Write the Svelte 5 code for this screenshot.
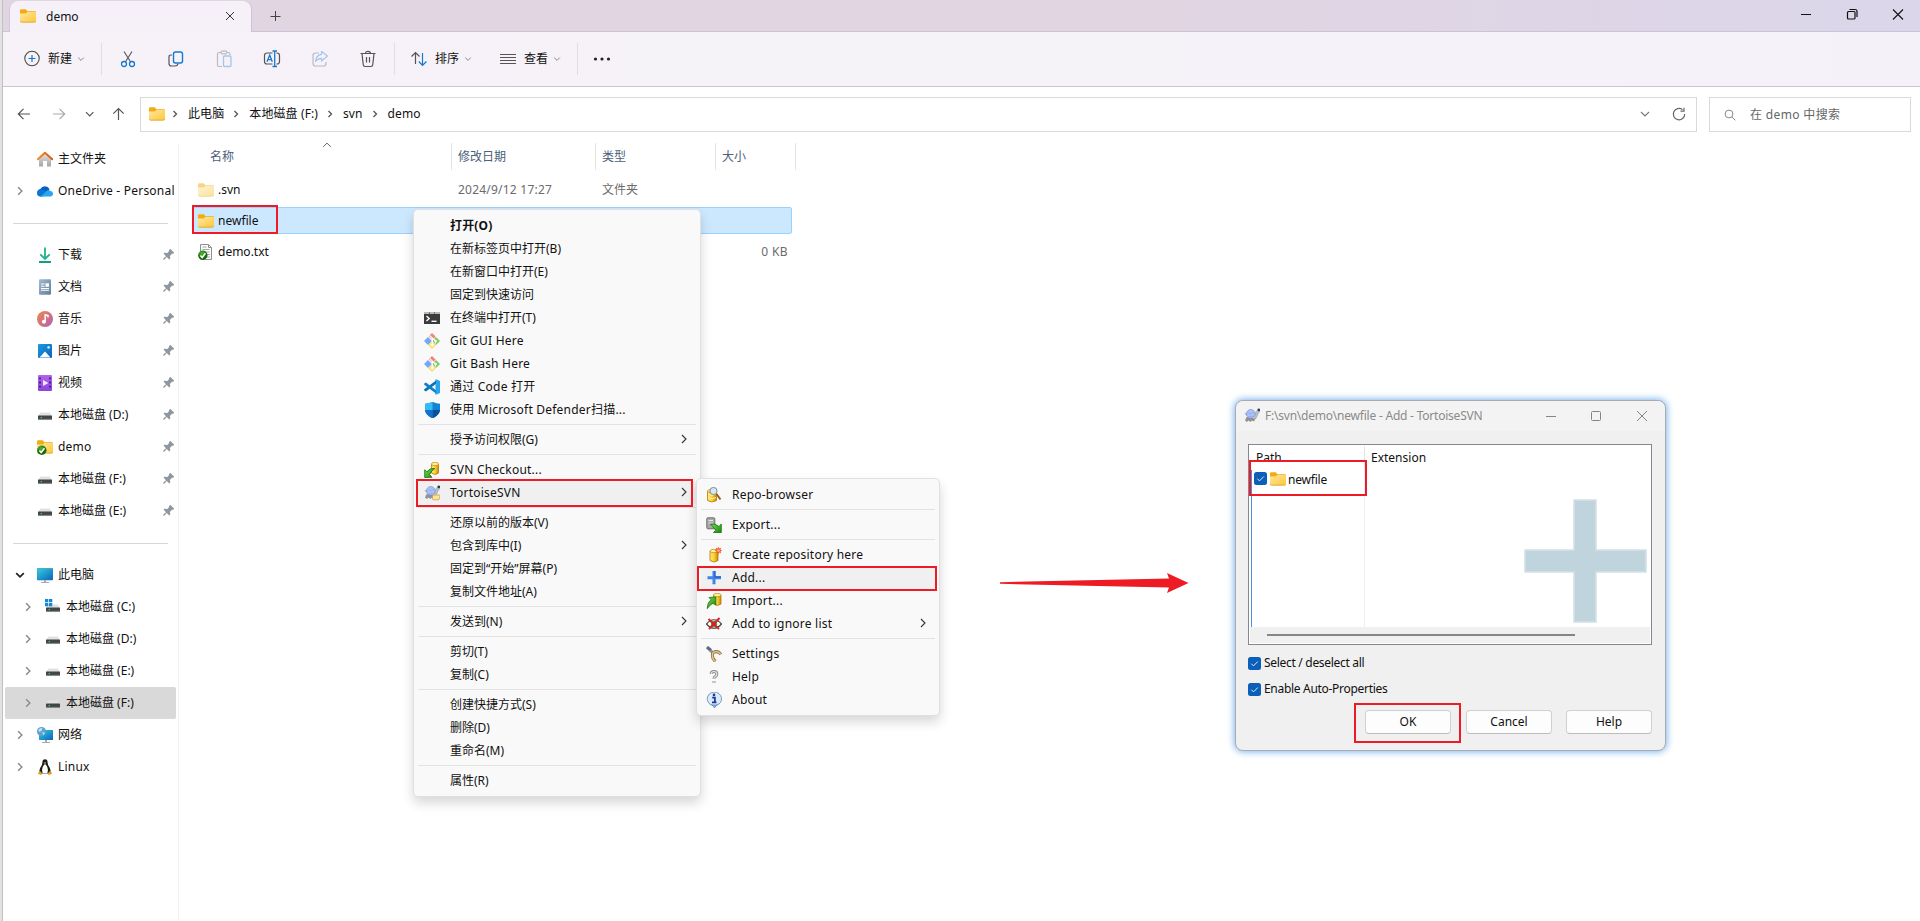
<script>
  const home = [
    { icon: 'home', text: '主文件夹' },
    { icon: 'cloud', text: 'OneDrive - Personal', arrow: 'right' },
    { sep: true },
    { icon: 'download', text: '下载', pin: true },
    { icon: 'doc', text: '文档', pin: true },
    { icon: 'music', text: '音乐', pin: true },
    { icon: 'picture', text: '图片', pin: true },
    { icon: 'video', text: '视频', pin: true },
    { icon: 'drive', text: '本地磁盘 (D:)', pin: true },
    { icon: 'folderok', text: 'demo', pin: true },
    { icon: 'drive', text: '本地磁盘 (F:)', pin: true },
    { icon: 'drive', text: '本地磁盘 (E:)', pin: true },
    { sep: true },
    { icon: 'pc', text: '此电脑', arrow: 'down' },
    { icon: 'windrive', text: '本地磁盘 (C:)', arrow: 'right', nested: true },
    { icon: 'drive', text: '本地磁盘 (D:)', arrow: 'right', nested: true },
    { icon: 'drive', text: '本地磁盘 (E:)', arrow: 'right', nested: true },
    { icon: 'drive', text: '本地磁盘 (F:)', arrow: 'right', nested: true, selected: true },
    { icon: 'network', text: '网络', arrow: 'right' },
    { icon: 'linux', text: 'Linux', arrow: 'right' }
  ];
  const menu = [
    { text: '打开(O)', bold: true },
    { text: '在新标签页中打开(B)' },
    { text: '在新窗口中打开(E)' },
    { text: '固定到快速访问' },
    { text: '在终端中打开(T)', icon: 'terminal' },
    { text: 'Git GUI Here', icon: 'git' },
    { text: 'Git Bash Here', icon: 'git' },
    { text: '通过 Code 打开', icon: 'code' },
    { text: '使用 Microsoft Defender扫描...', icon: 'shield' },
    { sep: true },
    { text: '授予访问权限(G)', sub: true },
    { sep: true },
    { text: 'SVN Checkout...', icon: 'checkout' },
    { text: 'TortoiseSVN', icon: 'tortoise', sub: true, hot: true },
    { sep: true },
    { text: '还原以前的版本(V)' },
    { text: '包含到库中(I)', sub: true },
    { text: '固定到“开始”屏幕(P)' },
    { text: '复制文件地址(A)' },
    { sep: true },
    { text: '发送到(N)', sub: true },
    { sep: true },
    { text: '剪切(T)' },
    { text: '复制(C)' },
    { sep: true },
    { text: '创建快捷方式(S)' },
    { text: '删除(D)' },
    { text: '重命名(M)' },
    { sep: true },
    { text: '属性(R)' }
  ];
  const submenu = [
    { text: 'Repo-browser', icon: 'repo' },
    { sep: true },
    { text: 'Export...', icon: 'export' },
    { sep: true },
    { text: 'Create repository here', icon: 'create' },
    { text: 'Add...', icon: 'add', hot: true },
    { text: 'Import...', icon: 'import' },
    { text: 'Add to ignore list', icon: 'ignore', sub: true },
    { sep: true },
    { text: 'Settings', icon: 'settings' },
    { text: 'Help', icon: 'help' },
    { text: 'About', icon: 'about' }
  ];
  const crumbs = ['此电脑', '本地磁盘 (F:)', 'svn', 'demo'];
  // Labels with a run of Latin letters are tracked a little wider.
  const latin = (t) => /[A-Za-z]{3}/.test(t);
</script>

<svg class="defs" width="0" height="0" aria-hidden="true">
  <defs>
    <linearGradient id="gFolder" x1="0" y1="0" x2="1" y2="1"><stop offset="0" stop-color="#ffe7a2" /><stop offset="1" stop-color="#fcc839" /></linearGradient>
    <linearGradient id="gRoof" x1="0" y1="0" x2="1" y2="0"><stop offset="0" stop-color="#f38b2a" /><stop offset="1" stop-color="#d65a12" /></linearGradient>
    <linearGradient id="gWall" x1="0" y1="0" x2="0" y2="1"><stop offset="0" stop-color="#e4e4e4" /><stop offset="1" stop-color="#a5a5a5" /></linearGradient>
    <linearGradient id="gDoc" x1="0" y1="0" x2="1" y2="1"><stop offset="0" stop-color="#a5b9cf" /><stop offset="1" stop-color="#5f7f9f" /></linearGradient>
    <linearGradient id="gMusic" x1="0" y1="0" x2="1" y2="1"><stop offset="0" stop-color="#f18746" /><stop offset="1" stop-color="#b160b6" /></linearGradient>
    <linearGradient id="gPic" x1="0" y1="0" x2="1" y2="1"><stop offset="0" stop-color="#199be4" /><stop offset="1" stop-color="#0f62b8" /></linearGradient>
    <linearGradient id="gVid" x1="0" y1="0" x2="0" y2="1"><stop offset="0" stop-color="#b165ec" /><stop offset="1" stop-color="#8a44d8" /></linearGradient>
    <linearGradient id="gPc" x1="0" y1="0" x2="1" y2="1"><stop offset="0" stop-color="#36d0e0" /><stop offset="1" stop-color="#0c62b8" /></linearGradient>
    <linearGradient id="gCyl" x1="0" y1="0" x2="1" y2="0"><stop offset="0" stop-color="#ffe873" /><stop offset=".5" stop-color="#fbd23a" /><stop offset="1" stop-color="#c98a05" /></linearGradient>
    <linearGradient id="gGreen" x1="0" y1="0" x2="1" y2="1"><stop offset="0" stop-color="#7bdc4a" /><stop offset="1" stop-color="#148a12" /></linearGradient>
    <radialGradient id="gOk" cx=".4" cy=".3"><stop offset="0" stop-color="#53b834" /><stop offset="1" stop-color="#146a08" /></radialGradient>
  </defs>
</svg>

{#snippet cyl(x, y, w, h)}
  <path d="M{x} {y + 2}v{h - 4}q{w / 2} 3 {w} 0v{-(h - 4)}z" fill="url(#gCyl)" stroke="#b57a08" stroke-width=".8" />
  <ellipse cx={x + w / 2} cy={y + 2} rx={w / 2} ry="1.7" fill="#fff0a0" stroke="#c08a10" stroke-width=".7" />
{/snippet}

{#snippet tick()}
  <circle cx="4.8" cy="11.2" r="4.7" fill="url(#gOk)" />
  <path d="M2.4 11.4l1.8 2.1 3.2-4.2" fill="none" stroke="#fff" stroke-width="1.6" />
{/snippet}

{#snippet folder()}
  <path d="M0 2.500q0-1.200 1.200-1.200h4.500l1.800 1.900H15q1 0 1 1V7H0z" fill="#f3ab12" />
  <path d="M0 5.500h5.600L7.400 4H15.400q.6 0 .6.700V13q0 1.200-1.200 1.200H1.200Q0 14.200 0 13z" fill="url(#gFolder)" />
  <path d="M.3 13.300q.3.900 1.200.9h13q.9 0 1.200-.9" fill="none" stroke="#dfa01d" stroke-width=".8" />
{/snippet}

{#snippet drive()}
  <path d="M3.500 5.500h9l2.500 3.500H1z" fill="#dfe1e3" />
  <rect x="1" y="8.600" width="14" height="4.200" rx=".5" fill="#434547" />
  <rect x="1" y="11.900" width="14" height=".9" fill="#8d8f91" />
  <rect x="3.600" y="10" width="1.200" height="1.200" fill="#3fe04b" />
{/snippet}

{#snippet screen()}
  <rect x="0" y="1.500" width="16" height="11.500" rx=".8" fill="url(#gPc)" stroke="#1f87a8" stroke-width=".6" />
  <path d="M7 13h2v2h3v1H4v-1h3z" fill="#a3a9ae" />
{/snippet}

{#snippet tort()}
  <path d="M2.500 9L1 12.500l2 1.500 1.500-1.500 2 1.500 1.500-1.500 2 1 1.500-3z" fill="#8f9299" />
  <path d="M.3 5l4 1.200-1 2z" fill="#8f9299" />
  <path d="M10 8l1.500-3.500q1.500-3 3.500-2l.6 1.500q-1.600 1-2.100 3.500L11.500 11z" fill="#b9bdc6" stroke="#85898f" stroke-width=".4" />
  <circle cx="14.800" cy="1.800" r="1.400" fill="#124458" />
  <circle cx="6.800" cy="5.800" r="4.300" fill="#a9c1fb" stroke="#7e93cd" stroke-width=".7" />
  <path d="M3.300 4.500q3 2 7 0M4 9q3-1.500 6 0" fill="none" stroke="#8aa2df" stroke-width=".6" />
{/snippet}

{#snippet ico(name)}
  <svg class="ico" width="16" height="16" viewBox="0 0 16 16">
    {#if name === 'folder'}
      {@render folder()}
    {:else if name === 'folderok'}
      {@render folder()}{@render tick()}
    {:else if name === 'home'}
      <path d="M2 7.500L8 2l6 5.500V15q0 .6-.6.6H10V10H6v5.600H2.600Q2 15.600 2 15z" fill="url(#gWall)" />
      <path d="M.8 8.300L8 1.700l7.200 6.600" fill="none" stroke="url(#gRoof)" stroke-width="2" stroke-linecap="round" stroke-linejoin="round" />
    {:else if name === 'cloud'}
      <path d="M4 13.500A3.800 3.800 0 0 1 3.300 6 5.200 5.200 0 0 1 12.500 6l-4 7z" fill="#0a5fc0" />
      <path d="M3.600 13.500q-3.600-.3-3.600-3.500 0-2.500 2.500-3.300Q5 6 9 8.500z" fill="#0b76d6" />
      <path d="M3.500 13.500L9.500 8q2-2 4 0 2.500.3 2.500 2.800 0 2.700-3 2.700z" fill="#2aa5ef" />
    {:else if name === 'download'}
      <path d="M8 .5V12M3.300 7.300L8 12l4.700-4.700" fill="none" stroke="#1fb28b" stroke-width="1.800" />
      <rect x="2" y="14" width="12" height="2" fill="#129c8c" />
    {:else if name === 'doc'}
      <rect x="2" y=".2" width="12" height="15.600" rx="1" fill="url(#gDoc)" />
      <path d="M4 5h3.500M4 7.300h3.500M4 9.500h8M4 11.300h8" stroke="#fff" stroke-width="1.100" />
      <rect x="8.500" y="4.300" width="3.500" height="3.500" fill="#fff" />
    {:else if name === 'music'}
      <circle cx="8" cy="8" r="8" fill="url(#gMusic)" />
      <circle cx="6.900" cy="10.700" r="2" fill="#fff" /><path d="M8.200 10.700V3.800l2.800.8v2" fill="none" stroke="#fff" stroke-width="1.500" />
    {:else if name === 'picture'}
      <rect x="1" y="1" width="14" height="14" rx="1" fill="url(#gPic)" />
      <path d="M2.500 14.500L8 8.600l5.500 5.900z" fill="#fff" /><circle cx="11.600" cy="4.400" r="1.300" fill="#cfeaff" />
    {:else if name === 'video'}
      <rect x="1" y="0" width="14" height="16" rx="1" fill="url(#gVid)" />
      <path d="M3 2.500v12M13 2.500v12" stroke="#451a80" stroke-width="1.800" stroke-dasharray="1.800 2.300" /><path d="M6 5l5.500 3L6 11z" fill="#f2e4ff" />
    {:else if name === 'drive'}
      {@render drive()}
    {:else if name === 'windrive'}
      {@render drive()}
      <path d="M0 0h3.300v3.300H0zM4 0h3.300v3.300H4zM0 4h3.300v3.300H0zM4 4h3.300v3.300H4z" fill="#1188d8" />
    {:else if name === 'pc'}
      {@render screen()}
    {:else if name === 'network'}
      <rect x="2" y="3" width="14" height="10" fill="url(#gPc)" /><path d="M8 13h2v2h3v1H5v-1h3z" fill="#a3a9ae" />
      <circle cx="4.500" cy="4.500" r="4.500" fill="#5aa3cf" /><path d="M1.500 2.500q2-2 4-1.500L4.500 4 2 5zM5 5l3 1-1.500 2z" fill="#c9e3f1" />
    {:else if name === 'linux'}
      <path d="M8 .2q2.600 0 2.600 3.200 0 2 1.600 4.300 2.300 4 .8 6.800H3q-1.500-2.800.8-6.800Q5.400 5.400 5.400 3.400 5.400.2 8 .2z" fill="#1b1b1b" />
      <path d="M8 5q1.400.8 2.400 3.300 1.200 3 0 5.900H5.600q-1.200-2.900 0-5.900Q6.600 5.800 8 5z" fill="#fff" />
      <path d="M6.700 3.800L8 3.300l1.300.5L8 5z" fill="#f0b72a" />
      <path d="M2.500 11.500l3 3q-.5 1.500-2 1.200l-2.500-.9zM13.500 11.500l-3 3q.5 1.500 2 1.200l2.500-.9z" fill="#d9a01b" />
    {:else if name === 'txt'}
      <path d="M2.500.5h8l3 3v12h-11z" fill="#fbfbfb" stroke="#8f8f8f" /><path d="M10.500.5v3h3" fill="none" stroke="#8f8f8f" />
      <path d="M4.500 3h4M4.500 5.500h7M4.500 8h7M8 10.500h4M8 13h4" stroke="#9c9c9c" stroke-width=".9" />{@render tick()}
    {:else if name === 'terminal'}
      <rect x="0" y="2" width="16" height="12" fill="#3b3b3b" /><path d="M0 2h16v2H0z" fill="#b9b9b9" /><path d="M5 2h1v2H5zM10 2h1v2h-1z" fill="#777" />
      <path d="M2.500 6l2.700 2.500L2.500 11" fill="none" stroke="#fff" stroke-width="1.400" /><path d="M7.500 11.300h5" stroke="#fff" stroke-width="1.400" />
    {:else if name === 'git'}
      <path d="M8 0l3.600 3.600-3 3L4.700 3.300z" fill="#f5807c" /><path d="M4 4l4 4-4 4-4-4z" fill="#74a7f7" />
      <path d="M12 4l4 4-4 4-4-4z" fill="#83c95e" /><path d="M8 8.400l4 3.800L8 16l-4-3.800z" fill="#fce07c" />
      <path d="M5.500 2.300L11.500 8v2.500M8.300 5v7" fill="none" stroke="#fff" stroke-width="1.100" /><circle cx="11.600" cy="8" r="1.300" fill="#fff" /><circle cx="8.300" cy="12" r="1.300" fill="#fff" />
    {:else if name === 'code'}
      <path d="M11.500 0L16 2v12l-4.500 2z" fill="#26a4ee" />
      <path d="M12 1.500v3.300L2 12.500.2 11.400v-1.200z" fill="#0b71b8" />
      <path d="M12 14.500v-3.300L2 3.500.2 4.600v1.200z" fill="#0b80cc" />
    {:else if name === 'shield'}
      <path d="M8.500-.3Q12 1.700 16 1.700V7.500Q16 13 8.500 16.400 1 13 1 7.500V1.700Q5 1.700 8.500-.3z" fill="#1482d4" />
      <path d="M8.500-.3V8H1V1.700Q5 1.700 8.500-.3z" fill="#32bcf4" /><path d="M8.500 8H16Q15.500 13 8.500 16.400z" fill="#0d4f9c" /><path d="M8.500 8v8.400Q1.500 13 1 8z" fill="#1271c8" />
    {:else if name === 'checkout'}
      {@render cyl(7.500, 0, 7, 13)}
      <path d="M.7 15.500V7.800l2.200 2Q6 5.500 10.800 6.500 7.500 8.500 5.600 12.500l2.400 2.800z" fill="url(#gGreen)" stroke="#17700f" stroke-width=".8" />
    {:else if name === 'import'}
      {@render cyl(7.500, 0, 7.500, 13)}
      <path d="M9.800 4v8L7.500 10Q3.800 11.500 1.300 15.600 1.500 9 5.200 6.800L3 4.500z" fill="url(#gGreen)" stroke="#17700f" stroke-width=".8" />
    {:else if name === 'tortoise'}
      {@render tort()}
      <path d="M8.500 11q.2-1 1.500-1h5q1.200 0 1 1.200l-.6 2.600q-.2 1-1.200 1H9.500q-1.200 0-1-1.200z" fill="#fae39a" stroke="#c69a3a" stroke-width=".7" />
    {:else if name === 'tort'}
      {@render tort()}
    {:else if name === 'repo'}
      {@render cyl(1.500, 2, 9, 13.500)}
      <path d="M2 7q4 2.500 8 0M2 10.500q4 2.500 8 0" fill="none" stroke="#fff3a8" />
      <circle cx="7.500" cy="4" r="3.600" fill="#d4e6f8" stroke="#858a90" /><path d="M10.500 7l4 5.500" stroke="#9b5c22" stroke-width="2" />
    {:else if name === 'export'}
      <rect x=".8" y=".8" width="8" height="11" rx="1" fill="#a8a8a8" stroke="#6e6e6e" /><path d="M2.500 3.500h4.500M2.500 6h4.500" stroke="#e8e8e8" />
      <path d="M15.300 7v8.500H7.500l2.200-2.300Q6.500 9.500 4.500 7 9.500 6.300 13 9.500z" fill="url(#gGreen)" stroke="#17700f" stroke-width=".8" />
    {:else if name === 'create'}
      {@render cyl(4, 2, 8, 13.500)}
      <path d="M12.500-.4l.8 2 2-.8-.8 2 2 .8-2 .8.8 2-2-.8-.8 2-.8-2-2 .8.8-2-2-.8 2-.8-.8-2 2 .8z" fill="#ff5a2c" /><circle cx="12.500" cy="3.600" r="1.200" fill="#ffc4a0" />
    {:else if name === 'add'}
      <path d="M6.500 1h3v5.200H15v3H9.500v5H6.500v-5H1.500v-3h5z" fill="#3f84e8" /><path d="M8.200 1h1.300v5.200H15v1.500H8.200z" fill="#2a63cd" />
    {:else if name === 'ignore'}
      <path d="M.5 8Q8-.5 15.500 8 8 16.500.5 8z" fill="#fff" stroke="#444" stroke-width="1.200" /><circle cx="8" cy="8" r="3.200" fill="#3fae5c" /><circle cx="8" cy="8" r="1.600" fill="#222" />
      <path d="M2.500 3l10.500 10M13.500 2L3 13" stroke="#dd1f1f" stroke-width="2" />
    {:else if name === 'settings'}
      <path d="M1 1l4 3.500" stroke="#5b6a7c" stroke-width="3" /><path d="M5 4l3 3M3.500 4.500l3 3" stroke="#8b9099" stroke-width="1.500" />
      <path d="M7 6.500Q12 4 15 8.500M7 6.500Q5 12 9.500 15.500" fill="none" stroke="#8f6f3c" stroke-width="3" /><path d="M7 6.500Q12 4 15 8.500M7 6.500Q5 12 9.500 15.500" fill="none" stroke="#e0c99b" stroke-width="1.400" />
    {:else if name === 'help'}
      <path d="M5.200 5Q5.200 2.500 8 2.500t2.800 2.500q0 1.500-1.400 2.500T8 9.800M8 12v1.800" fill="none" stroke="#8b8b8b" stroke-width="3" /><path d="M5.200 5Q5.200 2.500 8 2.500t2.800 2.500q0 1.500-1.400 2.500T8 9.800M8 12v1.800" fill="none" stroke="#e5e5e5" stroke-width="1.200" />
    {:else if name === 'about'}
      <path d="M8 0a7.400 6.900 0 0 1 2.300 13.500L8.500 16l-1.500-2.400A7.400 6.900 0 0 1 8 0z" fill="#dceafc" stroke="#6a8fbe" stroke-width=".9" />
      <path d="M2.500 11q5.500 3 11 0l-5 4z" fill="#4f86c6" opacity=".7" />
      <circle cx="8" cy="2.900" r="1.300" fill="#163a96" /><path d="M6.200 5.700h2.700v4.600M6 10.300h4.500" fill="none" stroke="#163a96" stroke-width="1.700" />
    {:else if name === 'pin'}
      <g transform="rotate(45 8 8)" fill="#8e979f"><path d="M4.500.5h7v2l-1 1v3.700l2.500 1.600v2H3v-2l2.500-1.600V3.500l-1-1z" /><rect x="7.200" y="10" width="1.600" height="6" /></g>
    {/if}
  </svg>
{/snippet}

{#snippet chev(dir, size = 5, color = '#555', w = 1.2)}
  <svg class="chev" width="12" height="12" viewBox="-6 -6 12 12" fill="none" stroke={color} stroke-width={w}>
    {#if dir === 'right'}<path d="M{-size / 2} {-size}L{size / 2} 0L{-size / 2} {size}" />
    {:else if dir === 'down'}<path d="M{-size} {-size / 2}L0 {size / 2}L{size} {-size / 2}" />
    {:else}<path d="M{-size} {size / 2}L0 {-size / 2}L{size} {size / 2}" />{/if}
  </svg>
{/snippet}

{#snippet check()}
  <svg class="check" width="13" height="13" viewBox="0 0 13 13"><rect width="13" height="13" rx="2.500" fill="#0a5fb8" /><path d="M3.300 6.700l2.200 2.200 4.300-4.400" fill="none" stroke="#dcebfa" stroke-width="1" /></svg>
{/snippet}

{#snippet menuList(list)}
  {#each list as m}
    {#if m.sep}
      <div class="msep"></div>
    {:else}
      <div class="mitem" class:bold={m.bold} class:hot={m.hot}>
        <span class="mico">{#if m.icon}{@render ico(m.icon)}{/if}</span>
        <span class="mtext" class:wide={latin(m.text)}>{m.text}</span>
        {#if m.sub}{@render chev('right', 4, '#333', 1.1)}{/if}
      </div>
    {/if}
  {/each}
{/snippet}

<div class="window">
  <header class="title">
    <div class="tab">
      {@render ico('folder')}
      <span>demo</span>
      <svg width="10" height="10" viewBox="0 0 10 10" fill="none" stroke="#333"><path d="M1 1l8 8M9 1L1 9" /></svg>
    </div>
    <svg class="plus" width="12" height="12" viewBox="0 0 12 12" fill="none" stroke="#444"><path d="M5.500 1v10M.5 6.500h10" /></svg>
    <div class="controls">
      <svg width="12" height="12" viewBox="0 0 12 12" fill="none" stroke="#111"><path d="M1 6.500h10" /></svg>
      <svg width="12" height="12" viewBox="0 0 12 12" fill="none" stroke="#111" stroke-width="1.200"><rect x="1.500" y="3.500" width="7.500" height="7.500" rx="1" /><path d="M3.500 1.500h5.500q2 0 2 2V9" /></svg>
      <svg width="12" height="12" viewBox="0 0 12 12" fill="none" stroke="#111" stroke-width="1.100"><path d="M1 1.500l10 10M11 1.500l-10 10" /></svg>
    </div>
  </header>

  <div class="toolbar">
    <div class="tool new">
      <svg width="18" height="18" viewBox="0 0 18 18" fill="none"><circle cx="9" cy="8.500" r="7.200" stroke="#4a4a4a" stroke-width="1.100" /><path d="M9 5v7M5.500 8.500h7" stroke="#1279cf" stroke-width="1.200" /></svg>
      <span>新建</span>{@render chev('down', 2.8, '#888', 1)}
    </div>
    <i class="vsep"></i>
    <div class="icons">
      <svg width="18" height="18" viewBox="0 0 18 18" fill="none"><path d="M5 1.500l6.500 10.300M13 1.500L6.500 11.800" stroke="#555" stroke-width="1.100" /><circle cx="5" cy="14" r="2.500" stroke="#1279cf" stroke-width="1.300" /><circle cx="13" cy="14" r="2.500" stroke="#1279cf" stroke-width="1.300" /></svg>
      <svg width="18" height="18" viewBox="0 0 18 18" fill="none" stroke-width="1.200"><path d="M5 5H4Q2 5 2 7v6.500Q2 16 4.500 16H8q2.500 0 3-2" stroke="#555" /><rect x="6.500" y="2" width="9" height="11" rx="2" stroke="#1279cf" stroke-width="1.400" /></svg>
      <svg width="18" height="18" viewBox="0 0 18 18" fill="none" stroke-width="1.200"><path d="M6 2.500H4Q2.500 2.500 2.500 4v11q0 1.500 1.500 1.500h3M12 2.500h1.500Q15 2.500 15 4v1" stroke="#bdb9bf" /><rect x="6" y="1.200" width="6" height="2.600" rx="1.200" stroke="#bdb9bf" /><rect x="8.500" y="6" width="7.500" height="10.500" rx="1.200" stroke="#9fc8ea" stroke-width="1.300" /></svg>
      <svg width="18" height="18" viewBox="0 0 18 18" fill="none" stroke-width="1.200"><path d="M9.500 3H4Q1.500 3 1.500 5.500v6Q1.500 14 4 14h5.500M13.500 3h.5q2.500 0 2.500 2.500v6Q16.500 14 14 14h-.5" stroke="#555" /><path d="M11.700 1v15.500M9.500 1h4.500M9.500 16.500h4.500M4 11.800l2.700-6.800 2.600 6.800M4.800 9.700h3.700" stroke="#1279cf" stroke-width="1.300" /></svg>
      <svg width="18" height="18" viewBox="0 0 18 18" fill="none" stroke-width="1.200"><path d="M8 3H4.500Q2 3 2 5.500v8Q2 16 4.500 16h8q2.500 0 2.500-2.500V12" stroke="#bdb9bf" /><path d="M10.500 1.500L16.500 6l-6 5V8.300Q7 8.300 4.500 11.500 5 5 10.500 4.300z" stroke="#9fc8ea" stroke-linejoin="round" /></svg>
      <svg width="18" height="18" viewBox="0 0 18 18" fill="none" stroke="#555" stroke-width="1.200"><path d="M1.500 3.500h15M6.500 3.500q0-2.200 2.500-2.200t2.500 2.200M3 3.500l1.200 11q.2 2 2 2h5.600q1.800 0 2-2L15 3.500M7.500 7v5.500M10.500 7v5.500" /></svg>
    </div>
    <i class="vsep"></i>
    <div class="tool sort">
      <svg width="18" height="18" viewBox="0 0 18 18" fill="none" stroke-width="1.200"><path d="M5.500 14V2.500M1.500 6.500l4-4 4 4" stroke="#555" /><path d="M12.500 3v12.500M8.800 11.500l3.700 4 3.900-4" stroke="#1279cf" /></svg>
      <span>排序</span>{@render chev('down', 2.8, '#888', 1)}
    </div>
    <div class="tool look">
      <svg width="18" height="18" viewBox="0 0 18 18" fill="none" stroke="#555" stroke-width="1"><path d="M1 4.500h16M1 7.500h16M1 10.500h16M1 13.500h16" /></svg>
      <span>查看</span>{@render chev('down', 2.8, '#888', 1)}
    </div>
    <i class="vsep"></i>
    <svg class="dots" width="18" height="6" viewBox="0 0 18 6" fill="#222"><circle cx="2.500" cy="3" r="1.600" /><circle cx="9" cy="3" r="1.600" /><circle cx="15.500" cy="3" r="1.600" /></svg>
  </div>

  <div class="address">
    <svg class="nav" width="120" height="16" viewBox="0 0 120 16" fill="none" stroke-width="1.200">
      <path d="M13 8H1.500M6.500 2.800L1.300 8l5.200 5.200" stroke="#555" />
      <path d="M36 8h11.500M42.500 2.800L47.700 8l-5.200 5.200" stroke="#aaa" />
      <path d="M69 6.200l3.700 3.700 3.700-3.700" stroke="#555" />
      <path d="M101.500 14V2.500M96.300 7.700l5.200-5.200 5.200 5.200" stroke="#555" />
    </svg>
    <div class="path">
      {@render ico('folder')}
      {#each crumbs as c}
        <span class="csep">{@render chev('right', 3, '#555', 1.3)}</span><span class="crumb">{c}</span>
      {/each}
      <span class="grow"></span>
      {@render chev('down', 4, '#777', 1.1)}
      <svg class="refresh" width="14" height="14" viewBox="0 0 14 14" fill="none" stroke="#666" stroke-width="1.200"><path d="M12.700 7A5.700 5.700 0 1 1 10.500 2.600M12 .8v3.400H8.500" /></svg>
    </div>
    <div class="search">
      <svg width="12" height="12" viewBox="0 0 12 12" fill="none" stroke="#888" stroke-width="1"><circle cx="5" cy="5" r="3.900" /><path d="M7.800 7.800l3.500 3.500" /></svg>
      <span>在 demo 中搜索</span>
    </div>
  </div>

  <div class="main">
    <nav>
      {#each home as n}
        {#if n.sep}
          <div class="nsep"></div>
        {:else}
          <div class="nitem" class:nested={n.nested} class:selected={n.selected}>
            <span class="narrow">{#if n.arrow === 'down'}{@render chev('down', 3.8, '#222', 1.7)}{:else if n.arrow}{@render chev('right', 3.8, '#8a8a8a', 1.4)}{/if}</span>
            {@render ico(n.icon)}
            <span class="ntext" class:wide={latin(n.text)}>{n.text}</span>
            {#if n.pin}<span class="pin">{@render ico('pin')}</span>{/if}
          </div>
        {/if}
      {/each}
    </nav>
    <section class="files">
      <div class="frow head"><span>名称</span><span>修改日期</span><span>类型</span><span>大小</span><div class="caret">{@render chev('up', 3.8, '#666', 1)}</div></div>
      <div class="frow dim"><span>{@render ico('folder')}.svn</span><span class="wide">2024/9/12 17:27</span><span>文件夹</span><span></span></div>
      <div class="frow sel"><span>{@render ico('folder')}newfile</span><span></span><span></span><span></span></div>
      <div class="frow"><span>{@render ico('txt')}demo.txt</span><span></span><span></span><span class="size">0 KB</span></div>
    </section>
  </div>

  <div class="menu ctx">{@render menuList(menu)}</div>
  <div class="menu svn">{@render menuList(submenu)}</div>

  <div class="dialog">
    <div class="dtitle">
      {@render ico('tort')}
      <span>F:\svn\demo\newfile - Add - TortoiseSVN</span>
      <svg width="102" height="12" viewBox="0 0 102 12" fill="none" stroke="#858585"><path d="M1 6.500h10" /><rect x="46.500" y="1.500" width="9" height="9" rx="1" /><path d="M92 1l10 10M102 1L92 11" /></svg>
    </div>
    <div class="list">
      <div class="lhead"><span>Path</span><span>Extension</span></div>
      <div class="lbody">
        <div class="lcol">{@render check()}{@render ico('folder')}<span>newfile</span></div>
        <svg class="bigplus" width="123" height="124" viewBox="0 0 123 124"><path d="M50 1h22v50h50v22H72v50H50V73H1V51h49z" fill="#c0d4de" stroke="#d3e0e7" stroke-width="1.500" /></svg>
      </div>
      <div class="scroll"><i></i></div>
    </div>
    <div class="opt">{@render check()}<span>Select / deselect all</span></div>
    <div class="opt two">{@render check()}<span>Enable Auto-Properties</span></div>
    <div class="buttons"><button>OK</button><button>Cancel</button><button>Help</button></div>
  </div>

  <svg class="arrow" width="192" height="24" viewBox="0 0 192 24"><path d="M1 11.200L170 7.500 168 2l21.500 10L168 22l2-5.500L1 12.800z" fill="#ed1c24" /></svg>
  <div class="mark m1"></div>
  <div class="mark m2"></div>
  <div class="mark m3"></div>
  <div class="mark m4"></div>
  <div class="mark m5"></div>
</div>

<style>
  :global(body) { margin: 0; background: #fff; overflow: hidden; }
  .defs { position: absolute; }
  .window {
    position: relative; box-sizing: border-box; width: 1920px; height: 921px; overflow: hidden;
    display: flex; flex-direction: column; background: #fff; color: #111;
    font: 12px/16px "Noto Sans", "Noto Sans CJK SC", sans-serif;
    box-shadow: inset 2px 0 #e2e2e2, inset 3px 0 #c0c0c0;
  }
  svg { display: block; flex: none; }
  span { white-space: nowrap; }
  .wide { letter-spacing: .22px; }
  .title { height: 31px; flex: none; display: flex; border-bottom: 1px solid #cdc3d6; background: linear-gradient(90deg, #e1d5e2 0 60%, #dbd6ea); margin-left: 3px; }
  .tab { box-sizing: border-box; width: 241px; height: 32px; margin: 1px 0 -1px 7px; padding: 0 16px 0 10px; border-radius: 8px 8px 0 0; background: #f6f1f8; display: flex; align-items: center; box-shadow: 1px 0 #cdc3d6, -1px 0 #d3c8d8; }
  .tab span { margin: -1px auto 0 10px; }
  .tab svg { margin-top: -2px; }
  .plus { margin: 10px 0 0 19px; }
  .controls { margin: 8px 16px 0 auto; display: flex; gap: 34px; }
  .toolbar { height: 54px; flex: none; margin-left: 3px; border-bottom: 1px solid #cbc3d9; background: linear-gradient(90deg, #f7f1f8, #f5f2f8 40%, #f4f2f8); display: flex; align-items: center; }
  .tool { display: flex; align-items: center; }
  .tool span { margin-left: 8px; }
  .tool :global(.chev) { margin-left: 3px; }
  .new { margin-left: 20px; width: 78px; }
  .new span { margin-left: 7px; }
  .vsep { width: 1px; height: 32px; background: #e3dce6; }
  .icons { display: flex; gap: 30px; margin: 0 17px 0 17px; }
  .sort { margin-left: 15px; width: 89px; }
  .sort span { margin-left: 7px; }
  .look { width: 78px; }
  .look span { margin-left: 7px; }
  .dots { margin-left: 15px; }
  .address { height: 35px; flex: none; display: flex; align-items: center; margin: 10px 9px 0 0; }
  .nav { margin: -1px 0 0 17px; }
  .path { box-sizing: border-box; width: 1557px; margin-left: 3px; height: 35px; border: 1px solid #d9d9d9; display: flex; align-items: center; padding: 0 10px 1px 8px; }
  .csep { margin: 0 7px 0 6px; }
  .csep:first-of-type { margin: 0 7px 0 4px; }
  .crumb { letter-spacing: .1px; }
  .grow { flex: 1; }
  .refresh { margin-left: 21px; }
  .search { box-sizing: border-box; flex: 1; margin-left: 12px; height: 35px; border: 1px solid #d9d9d9; display: flex; align-items: center; padding-left: 14px; gap: 14px; color: #666; letter-spacing: .35px; }
  .main { flex: 1; display: flex; margin-left: 3px; padding-top: 11px; }
  nav { width: 175px; border-right: 1px solid #f2f2f2; flex: none; }
  .nitem { height: 32px; display: flex; align-items: center; box-sizing: border-box; margin: 0 2px; padding-left: 8.500px; border-radius: 2px; }
  .nested { padding-left: 16.500px; }
  .selected { background: #d9d9d9; }
  .narrow { width: 12px; margin-right: 11.500px; }
  .ntext { margin-left: 5px; }
  .pin { margin-left: auto; transform: scale(.8); }
  .nsep { height: 32px; margin: 0 10px; background: linear-gradient(#d6d6d6, #d6d6d6) 0 16px / 155px 1px no-repeat; }
  .files { margin-left: 14px; width: 604px; }
  .frow { display: flex; align-items: center; box-sizing: border-box; width: 599px; height: 27px; margin-bottom: 4px; border: 1px solid transparent; border-radius: 2px; color: #6b6b6b; }
  .frow > span { display: flex; align-items: center; box-sizing: border-box; }
  .frow > span:nth-child(1) { width: 258px; padding-left: 4px; gap: 4px; color: #111; }
  .frow > span:nth-child(2) { width: 144px; padding-left: 6px; }
  .frow > span:nth-child(3) { width: 120px; padding-left: 6px; }
  .frow > span:nth-child(4) { width: 72px; padding-left: 6px; }
  .frow > .size { justify-content: flex-end; letter-spacing: .4px; }
  .frow.head { width: 604px; margin-bottom: 6px; height: 27px; color: #4c607a; border: 0; position: relative; }
  .frow.head > span { height: 27px; border-right: 1px solid #e5e5e5; }
  .frow.head > span:nth-child(1) { color: #4c607a; padding-left: 17px; width: 259px; }
  .frow.head > span:nth-child(4) { width: 80px; }
  .caret { position: absolute; left: 128px; top: -4px; }
  .dim :global(svg) { opacity: .5; }
  .frow.sel { background: #cce8ff; border-color: #99d1ff; }
  .menu { position: absolute; box-sizing: border-box; background: #f9f9f9; border: 1px solid #e0e0e0; border-radius: 5px; padding: 4px; box-shadow: 0 6px 12px rgba(0, 0, 0, .16); }
  .ctx { left: 413px; top: 209px; width: 288px; height: 588px; }
  .svn { left: 696px; top: 478px; width: 244px; height: 238px; }
  .mitem { height: 23px; display: flex; align-items: center; padding: 0 6px; border-radius: 3px; }
  .mitem :global(.chev) { margin: -2px 0 0 auto; }
  .mico { width: 26px; }
  .bold { font-weight: 700; letter-spacing: .15px; }
  .hot { background: #f0f0f0; }
  .svn .mitem { padding-left: 5px; }
  .msep { height: 7px; background: linear-gradient(#e2e2e2, #e2e2e2) 0 3px / 100% 1px no-repeat; }
  .dialog { position: absolute; box-sizing: border-box; left: 1235px; top: 400px; width: 431px; height: 351px; border: 1px solid #a9abb0; border-radius: 8px; background: #f0f0f0; box-shadow: 0 0 7px 1px #7db6ee; }
  .dtitle { height: 30px; display: flex; align-items: center; padding-left: 8px; background: #f3f3f3; border-radius: 8px 8px 0 0; color: #8a8a8a; }
  .dtitle span { margin-left: 5px; letter-spacing: -.22px; }
  .dtitle svg:last-child { margin-left: auto; margin-right: 18px; overflow: visible; }
  .list { box-sizing: border-box; margin: 13px 13px 0 12px; height: 201px; border: 1px solid #828790; background: #fff; padding: 1px; display: flex; flex-direction: column; }
  .lhead { height: 24px; display: flex; align-items: center; }
  .lhead span { box-sizing: border-box; height: 24px; padding: 4px 0 0 6px; }
  .lhead span:first-child { width: 115px; border-right: 1px solid #e5e5e5; }
  .lbody { height: 157px; display: flex; justify-content: space-between; }
  .lcol { box-sizing: border-box; width: 114px; margin-left: 1px; border-left: 1px solid #4a8fdc; border-right: 1px solid #e6effa; display: flex; align-items: flex-start; padding: 2px 0 0 2px; }
  .lcol :global(.ico) { margin-left: 3px; margin-top: -1px; }
  .lcol span { margin: 0 0 0 2px; letter-spacing: -.2px; }
  .bigplus { margin: 29px 3px 0 0; }
  .scroll { height: 16px; background: #f0f0f0; display: flex; align-items: center; }
  .scroll i { margin-left: 17px; width: 308px; height: 2px; background: #868686; }
  .opt { display: flex; align-items: center; gap: 3px; margin: 10px 0 0 12px; height: 16px; letter-spacing: -.3px; }
  .buttons { display: flex; justify-content: flex-end; gap: 14px; padding: 13px 13px 0 0; }
  button { box-sizing: border-box; width: 86px; height: 24px; border: 1px solid #d0d0d0; border-bottom-color: #bcbcbc; border-radius: 4px; background: #fdfdfd; font: inherit; color: #111; padding: 0; }
  button:first-child { margin-right: 1px; }
  .arrow { position: absolute; left: 999px; top: 571px; }
  .mark { position: absolute; box-sizing: border-box; border: 2px solid #ed1c24; }
  .m1 { left: 192px; top: 205px; width: 86px; height: 29px; }
  .m2 { left: 416px; top: 479px; width: 277px; height: 28px; }
  .m3 { left: 697px; top: 566px; width: 240px; height: 25px; }
  .m4 { left: 1249px; top: 460px; width: 118px; height: 36px; }
  .m5 { left: 1354px; top: 703px; width: 107px; height: 40px; }
</style>
